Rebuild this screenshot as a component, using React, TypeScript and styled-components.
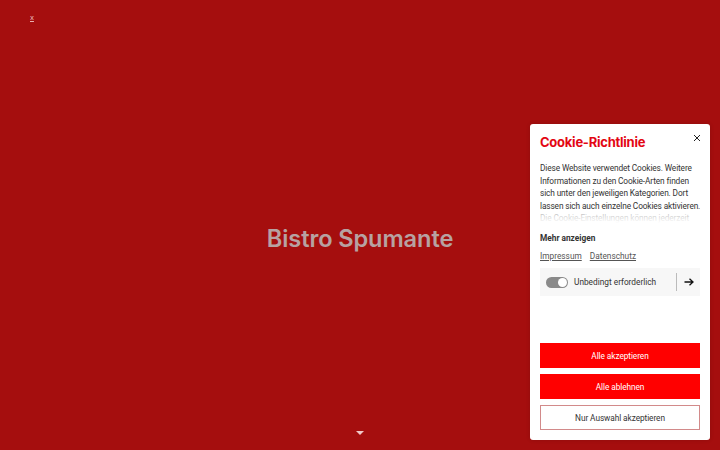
import React from "react";
import styled, { createGlobalStyle } from "styled-components";

const Global = createGlobalStyle`
  html, body { margin: 0; padding: 0; height: 100%; }
  body { background: #a50e0e; font-family: "Roboto", "Liberation Sans", sans-serif; }
  #root { height: 100%; }
`;

const Page = styled.div`
  position: relative;
  height: 450px;
  width: 720px;
  background: #a50e0e;
  display: flex;
  align-items: center;
  justify-content: center;
  overflow: hidden;
`;

const SkipLink = styled.a`
  position: absolute;
  left: 30px;
  top: 13px;
  font-size: 8px;
  color: #e8b0b0;
  text-decoration: underline;
  font-family: "Roboto", sans-serif;
`;

const Heading = styled.h1`
  margin: 0;
  font-family: "Inter", "Open Sans", sans-serif;
  font-weight: 600;
  font-size: 23.6px;
  letter-spacing: -0.1px;
  color: #b7a2a2;
  transform: translateY(13px);
`;

const DownArrow = styled.div`
  position: absolute;
  left: 356px;
  top: 431px;
  width: 0;
  height: 0;
  border-left: 4px solid transparent;
  border-right: 4px solid transparent;
  border-top: 4px solid #f0c8c8;
`;

const Card = styled.div`
  position: absolute;
  right: 10px;
  bottom: 10px;
  width: 180px;
  height: 316px;
  box-sizing: border-box;
  background: #fff;
  border-radius: 3px;
  padding: 10px;
  display: flex;
  flex-direction: column;
  box-shadow: 0 0 4px rgba(0, 0, 0, 0.15);
`;

const Header = styled.div`
  display: flex;
  justify-content: space-between;
  align-items: flex-start;
`;

const Title = styled.div`
  font-family: "Inter", "Noto Sans", sans-serif;
  font-weight: 700;
  font-size: 13px;
  line-height: 17px;
  color: #e30613;
  letter-spacing: -0.25px;
`;

const Close = styled.button`
  border: none;
  background: none;
  padding: 0;
  margin: -2px -3px 0 0;
  width: 12px;
  height: 12px;
  display: flex;
  align-items: center;
  justify-content: center;
  cursor: pointer;
`;

const Body = styled.div`
  position: relative;
  margin-top: 11px;
  font-size: 8.3px;
  letter-spacing: -0.12px;
  line-height: 12.5px;
  color: #333;
  height: 61px;
  overflow: hidden;
  &::after {
    content: "";
    position: absolute;
    left: 0;
    right: 0;
    bottom: 0;
    height: 14px;
    background: linear-gradient(rgba(255, 255, 255, 0.55), #fff);
  }
`;

const Line = styled.span`
  display: block;
  white-space: nowrap;
`;

const More = styled.div`
  margin-top: 10px;
  font-size: 8.3px;
  font-weight: 700;
  color: #333;
`;

const Links = styled.div`
  display: flex;
  gap: 8px;
  margin-top: 8px;
`;

const Link = styled.a`
  font-size: 8.3px;
  color: #555;
  text-decoration: underline;
`;

const ToggleRow = styled.div`
  margin-top: 7px;
  background: #f7f7f7;
  height: 28px;
  display: flex;
  align-items: center;
  padding-left: 6px;
  padding-right: 6px;
`;

const Toggle = styled.div`
  position: relative;
  width: 22px;
  height: 11px;
  border-radius: 6px;
  background: #8a8a8a;
  flex-shrink: 0;
  &::after {
    content: "";
    position: absolute;
    right: 1px;
    top: 1px;
    width: 9px;
    height: 9px;
    border-radius: 50%;
    background: #fff;
  }
`;

const ToggleLabel = styled.span`
  margin-left: 6px;
  font-size: 8.3px;
  color: #333;
  flex: 1;
`;

const Divider = styled.div`
  width: 1px;
  height: 18px;
  background: #bbb;
  margin-right: 7px;
`;

const Buttons = styled.div`
  margin-top: auto;
  display: flex;
  flex-direction: column;
  gap: 6px;
`;

const Btn = styled.button<{ $outline?: boolean }>`
  height: 25px;
  width: 100%;
  box-sizing: border-box;
  font-family: "Roboto", sans-serif;
  font-size: 8.3px;
  letter-spacing: -0.08px;
  border: 1px solid ${(p) => (p.$outline ? "#d28a8a" : "#ff0000")};
  background: ${(p) => (p.$outline ? "#fff" : "#ff0000")};
  color: ${(p) => (p.$outline ? "#333" : "#fff")};
  cursor: pointer;
  padding: 0;
`;

const bodyLines = [
  "Diese Website verwendet Cookies. Weitere",
  "Informationen zu den Cookie-Arten finden",
  "sich unter den jeweiligen Kategorien. Dort",
  "lassen sich auch einzelne Cookies aktivieren.",
  "Die Cookie-Einstellungen können jederzeit",
  "geändert werden.",
];

export default function App() {
  return (
    <>
      <Global />
      <Page>
        <SkipLink href="#">x</SkipLink>
        <Heading>Bistro Spumante</Heading>
        <DownArrow />
        <Card>
          <Header>
            <Title>Cookie-Richtlinie</Title>
            <Close aria-label="close">
              <svg width="8" height="8" viewBox="0 0 8 8">
                <path d="M1 1L7 7M7 1L1 7" stroke="#222" strokeWidth="1" />
              </svg>
            </Close>
          </Header>
          <Body>
            {bodyLines.map((l) => (
              <Line key={l}>{l}</Line>
            ))}
          </Body>
          <More>Mehr anzeigen</More>
          <Links>
            <Link href="#">Impressum</Link>
            <Link href="#">Datenschutz</Link>
          </Links>
          <ToggleRow>
            <Toggle />
            <ToggleLabel>Unbedingt erforderlich</ToggleLabel>
            <Divider />
            <svg width="10" height="8" viewBox="0 0 10 8">
              <path d="M0.5 4H9M5.5 0.8L9 4L5.5 7.2" stroke="#111" strokeWidth="1.3" fill="none" />
            </svg>
          </ToggleRow>
          <Buttons>
            <Btn>Alle akzeptieren</Btn>
            <Btn>Alle ablehnen</Btn>
            <Btn $outline>Nur Auswahl akzeptieren</Btn>
          </Buttons>
        </Card>
      </Page>
    </>
  );
}
